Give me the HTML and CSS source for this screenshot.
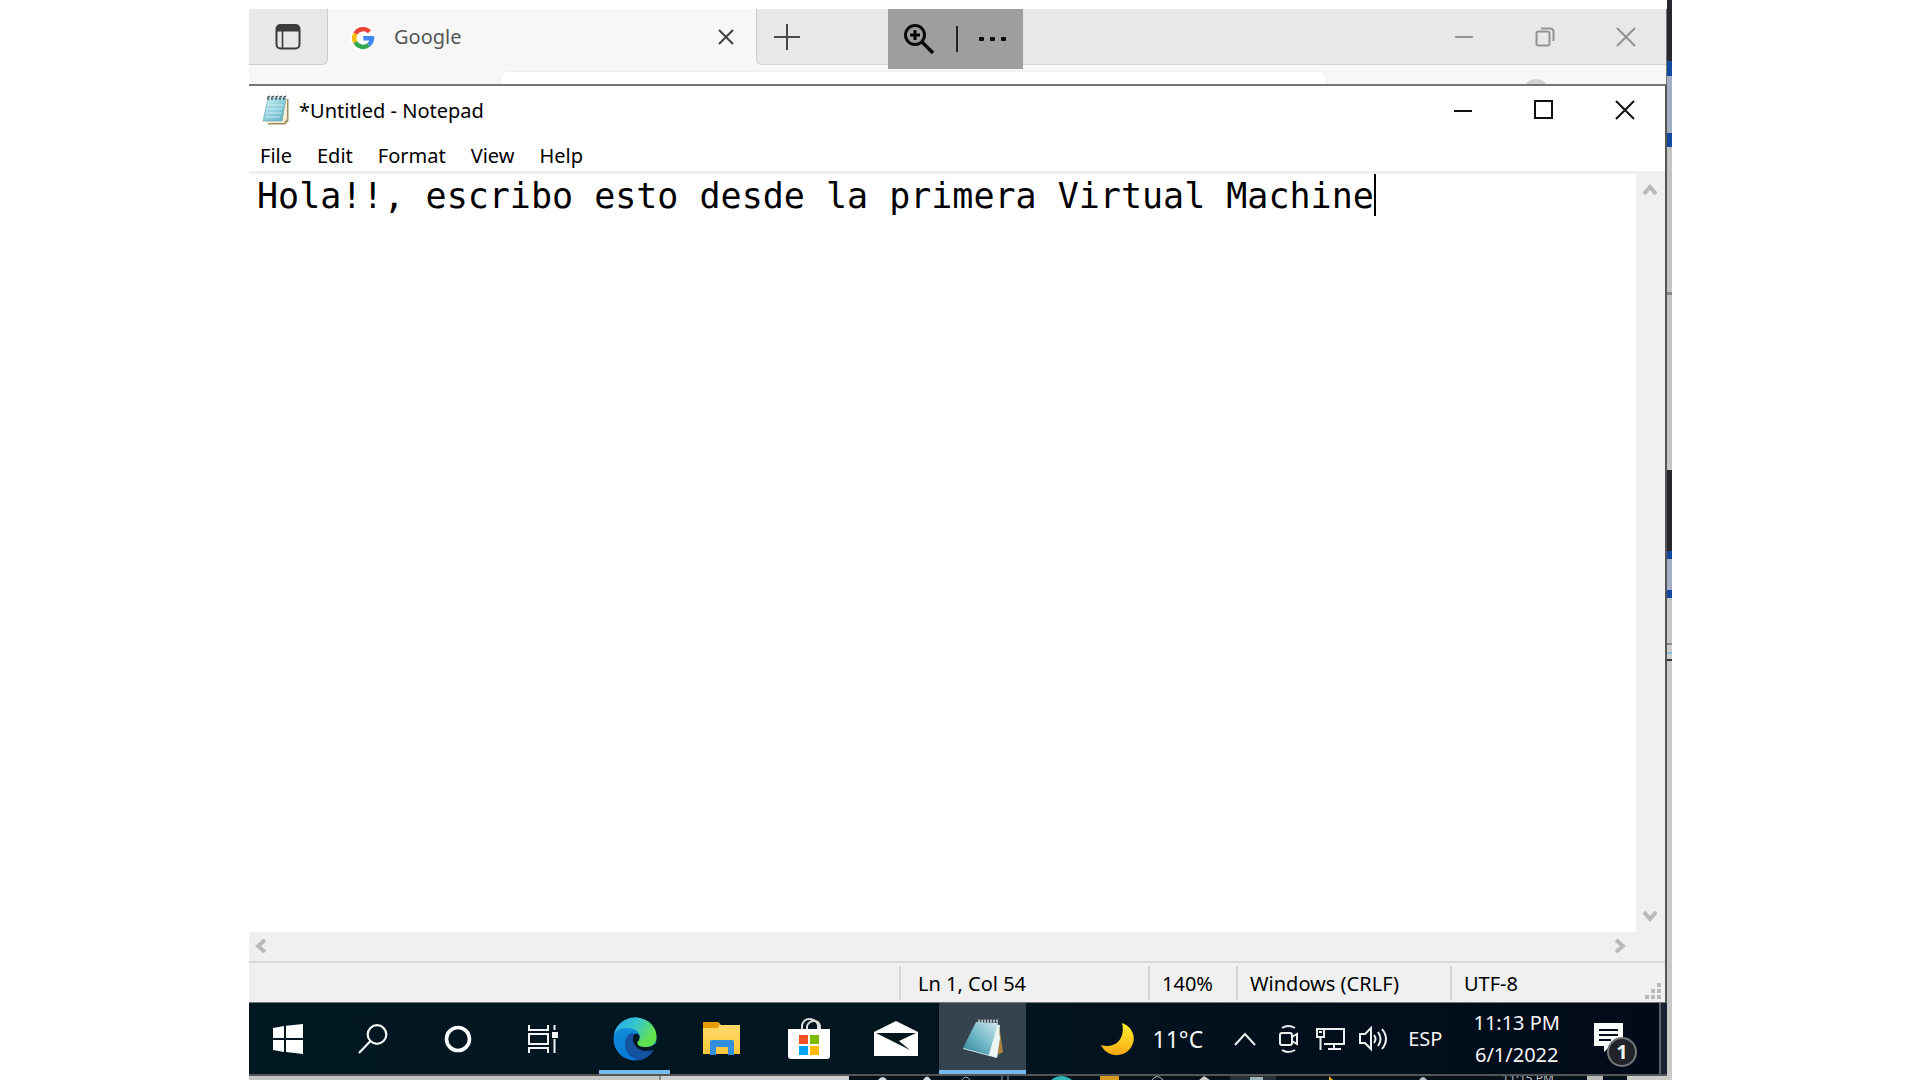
FILE: index.html
```html
<!DOCTYPE html>
<html lang="en">
<head>
<meta charset="utf-8">
<title>Untitled - Notepad</title>
<link rel="stylesheet" href="styles.css">
</head>
<body>
<svg width="0" height="0" class="defs" aria-hidden="true">
  <defs>
    <linearGradient id="page" x1="0" y1="0" x2="1" y2="1"><stop offset="0" stop-color="#d3f0f4"/><stop offset=".5" stop-color="#8fd0dd"/><stop offset="1" stop-color="#58acc0"/></linearGradient>
    <linearGradient id="page2" x1="0" y1="1" x2="1" y2="0"><stop offset="0" stop-color="#2b8197"/><stop offset=".5" stop-color="#75b9c9"/><stop offset="1" stop-color="#d0e6ea"/></linearGradient>
    <linearGradient id="edgeA" x1="0" y1="0" x2="1" y2=".4"><stop offset="0" stop-color="#2aa9e6"/><stop offset=".5" stop-color="#34c4d3"/><stop offset="1" stop-color="#66e34b"/></linearGradient>
    <linearGradient id="edgeB" x1="0" y1="0" x2="0" y2="1"><stop offset="0" stop-color="#1595da"/><stop offset="1" stop-color="#0877d5"/></linearGradient>
    <linearGradient id="moon" x1="0" y1="0" x2="0" y2="1"><stop offset="0" stop-color="#fff02a"/><stop offset="1" stop-color="#f9a817"/></linearGradient>
    <linearGradient id="fold" x1="0" y1="0" x2="0" y2="1"><stop offset="0" stop-color="#ffdc6c"/><stop offset="1" stop-color="#fbc63b"/></linearGradient>
  </defs>
</svg>
<div class="layout">
  <main class="screen">
    <section class="browser" aria-label="Browser">
      <div class="tabs">
        <button class="tab-actions" aria-label="Tab actions"><svg width="26" height="27" viewBox="0 0 26 27" fill="none" stroke="#3b3b3b" stroke-width="2"><rect x="1.5" y="2" width="23" height="23.500" rx="4"/><path d="M2 5.500h22" stroke-width="6"/><path d="M7.500 8v17" stroke-width="1.600"/></svg></button>
        <div class="tab">
          <svg class="google" width="26" height="26" viewBox="0 0 26 26" fill="none" stroke-width="4.400"><circle cx="13" cy="13" r="13" fill="#fff" stroke="none"/><path d="M19.500 6.800A9 9 0 0 0 5.300 8.700" stroke="#ea4335"/><path d="M5.300 8.700a9 9 0 0 0 0 8.600" stroke="#fbbc05"/><path d="M5.300 17.300A9 9 0 0 0 18.700 20" stroke="#34a853"/><path d="M18.700 20A9 9 0 0 0 22 13.300H13.300" stroke="#4285f4"/></svg>
          <span>Google</span>
          <button class="tab-close" aria-label="Close tab"><svg width="16" height="16" viewBox="0 0 16 16" stroke="#444" stroke-width="2"><path d="M1 1l14 14M15 1L1 15"/></svg></button>
        </div>
        <button class="new-tab" aria-label="New tab"><svg width="26" height="26" viewBox="0 0 26 26" stroke="#484848" stroke-width="2"><path d="M13 0v26M0 13h26"/></svg></button>
        <div class="captions dim">
          <button aria-label="Minimize browser"><svg width="20" height="20" viewBox="0 0 20 20"><path d="M1 10h18"/></svg></button>
          <button aria-label="Restore browser"><svg width="20" height="20" viewBox="0 0 20 20"><rect x="1.500" y="4.500" width="13" height="14" rx="2"/><path d="M6 1.500h9q3.500 0 3.500 3.500v9"/></svg></button>
          <button aria-label="Close browser"><svg width="20" height="20" viewBox="0 0 20 20"><path d="M1 1l18 18M19 1L1 19"/></svg></button>
        </div>
      </div>
      <div class="toolbar"><div class="address"></div><div class="avatar"></div></div>
      <div class="zoombar">
        <button aria-label="Zoom"><svg width="32" height="32" viewBox="0 0 32 32" fill="none" stroke="#090909" stroke-width="3"><circle cx="12" cy="12" r="9.500"/><path d="M19 19l11 11" stroke-width="3.500"/><path d="M7 12h10M12 7v10"/></svg></button>
        <i></i>
        <button aria-label="More options"><svg width="28" height="6" viewBox="0 0 28 6" fill="#090909"><rect y="1" width="5" height="4" rx="1"/><rect x="11" y="1" width="5" height="4" rx="1"/><rect x="22" y="1" width="5" height="4" rx="1"/></svg></button>
      </div>
    </section>

    <section class="notepad" aria-label="Notepad">
      <header class="title">
        <svg width="28" height="31" viewBox="0 0 28 31"><path d="M7 4h19.500v22L23 29.500H6z" fill="#a08d63"/><path d="M7 4h18v20l-3 4H4z" fill="#f4ecd2"/><path d="M6 3h18l-4 23H1z" fill="url(#page)" stroke="#65a4b0" stroke-width=".6"/><path d="M6 10h15M5 14h15M4 18h15M4 22h14" stroke="#c9eef2" stroke-width="1"/><path d="M6 5V2l2-1M10 5V2l2-1M14 5V2l2-1M18 5V2l2-1M22 5V2l2-1" fill="none" stroke="#3e4c50" stroke-width="1.300"/></svg>
        <h1>*Untitled - Notepad</h1>
        <div class="captions">
          <button aria-label="Minimize"><svg width="20" height="20" viewBox="0 0 20 20"><path d="M1 11h18"/></svg></button>
          <button aria-label="Maximize"><svg width="20" height="20" viewBox="0 0 20 20"><path d="M1 1h17v17H1z"/></svg></button>
          <button aria-label="Close"><svg width="20" height="20" viewBox="0 0 20 20"><path d="M1 1l18 18M19 1L1 19"/></svg></button>
        </div>
      </header>
      <nav class="menu"><button>File</button><button>Edit</button><button>Format</button><button>View</button><button>Help</button></nav>
      <div class="editor">
        <div class="page"><textarea aria-label="Text editor" rows="1" spellcheck="false">Hola!!, escribo esto desde la primera Virtual Machine</textarea><span class="caret"></span></div>
        <div class="vscroll">
          <button aria-label="Scroll up"><svg width="14" height="12" viewBox="0 0 14 12"><path d="M1 10l6-7 6 7"/></svg></button>
          <button aria-label="Scroll down"><svg width="14" height="12" viewBox="0 0 14 12"><path d="M1 2l6 7 6-7"/></svg></button>
        </div>
      </div>
      <div class="hscroll">
        <button aria-label="Scroll left"><svg width="12" height="14" viewBox="0 0 12 14"><path d="M10 1L3 7l7 6"/></svg></button>
        <button aria-label="Scroll right"><svg width="12" height="14" viewBox="0 0 12 14"><path d="M2 1l7 6-7 6"/></svg></button>
      </div>
      <footer class="status">
        <span class="position">Ln 1, Col 54</span><span class="zoom">140%</span><span class="eol">Windows (CRLF)</span><span class="encoding">UTF-8</span>
        <svg class="grip" width="16" height="16" viewBox="0 0 16 16" fill="#b8b8b8"><path d="M12 0h4v4h-4zM6 6h4v4H6zM12 6h4v4h-4zM0 12h4v4H0zM6 12h4v4H6zM12 12h4v4h-4z"/></svg>
      </footer>
    </section>

    <footer class="taskbar">
      <button class="start" aria-label="Start"><svg width="30" height="30" viewBox="0 0 30 30" fill="#fff"><path d="M0 4l11-2v12H0zM13 1.700L30 0v14H13zM0 16h11v12L0 26zM13 16h17v14l-17-2z"/></svg></button>
      <button class="sys" aria-label="Search"><svg width="30" height="30" viewBox="0 0 30 30" fill="none" stroke="#f4f4f4" stroke-width="2.200"><circle cx="19" cy="10.500" r="9.300"/><path d="M12.500 17L1 29"/></svg></button>
      <button class="sys" aria-label="Cortana"><svg width="30" height="30" viewBox="0 0 30 30" fill="none" stroke="#fff" stroke-width="3.600"><circle cx="15" cy="15" r="11.500"/></svg></button>
      <button class="sys last" aria-label="Task view"><svg width="30" height="28" viewBox="0 0 30 28" fill="none" stroke="#f4f4f4" stroke-width="2"><path d="M1 0v5h19V0M1 9h19v10H1zM1 28v-5h19v5M26.500 0v5M26.500 14v14"/><path d="M24 7h6v6h-6z" fill="#fff" stroke="none"/></svg></button>
      <button class="app open" aria-label="Microsoft Edge"><svg width="44" height="44" viewBox="0 0 44 44"><circle cx="22" cy="22" r="21.500" fill="url(#edgeB)"/><path d="M.8 18C3 7 12 .5 22 .5 35 .5 43.500 10 43.500 19c0 7-5 10.500-10.500 10.500-6 0-10-2-8.500-4.500 2.500-3 3-6 1-9C24 13 20 11 14 11 8 11 3 13.500.8 18z" fill="url(#edgeA)"/><path d="M19 16c-5 2-7 6-7 11 0 9 7 16 16 16 6-2 11-6 13-11-1-1-3 1-8 1-8 0-14-6-11-14 0-2-1-3-3-3z" fill="#1552a0"/><path d="M22 17c3-2 6 2 4 6-1 2-3 4 1 6 5 2 13 1 16-3l1 4-2 5c-1-3-3-1-9-1-8 0-14-7-13-13 0-2 1-3 2-4z" fill="#011721"/><path d="M25 24c-2 4 2 6 8 6 6 0 10-4 10.500-9z" fill="#5de04f"/></svg></button>
      <button class="app" aria-label="File Explorer"><svg width="40" height="34" viewBox="0 0 40 34"><path d="M1 0h15l3 3h19v29H1z" fill="url(#fold)"/><path d="M1 0h15l2 2-2 4H1z" fill="#e79b06"/><path d="M8 33V20q0-2 2-2h20q2 0 2 2v13h-6v-8H14v8z" fill="#338fdd"/></svg></button>
      <button class="app" aria-label="Microsoft Store"><svg width="42" height="44" viewBox="0 0 42 44"><path d="M14 13V8q2-6 7-6 7 0 9 6v5M19 13V9q2-5 7-5 5 0 6 5v4" fill="none" stroke="#ddd" stroke-width="2"/><path d="M0 12h42v27q0 3-3 3H3q-3 0-3-3z" fill="#fff"/><path d="M11 18h9v9h-9z" fill="#f25022"/><path d="M22 18h9v9h-9z" fill="#7fba00"/><path d="M11 29h9v9h-9z" fill="#00a4ef"/><path d="M22 29h9v9h-9z" fill="#ffb900"/></svg></button>
      <button class="app" aria-label="Mail"><svg width="44" height="36" viewBox="0 0 44 36"><path d="M0 11L22 0l22 11v24H0z" fill="#fff"/><path d="M2 12h40l-17 8 11 9z" fill="#021620"/></svg></button>
      <button class="app open active" aria-label="Notepad"><svg width="42" height="42" viewBox="0 0 42 42"><path d="M37 6l4 28-5 3z" fill="#a98445"/><path d="M15 4l23 3-3 33L1 31z" fill="#d6e7e9"/><path d="M14 4l22 1-9 32L1 30z" fill="url(#page2)"/><path d="M36 6l-9 31 8 3 3-20z" fill="#ecf5f5"/><path d="M16 3h20" stroke="#a9b4b8" stroke-width="3" stroke-dasharray="2 1"/></svg></button>
      <div class="tray">
        <button class="weather"><svg width="34" height="34" viewBox="0 0 34 34"><path d="M21 1c16 6 15 25 1 31-8 3-18 0-22-9 14 4 25-6 21-22z" fill="url(#moon)" stroke="none"/></svg>11°C</button>
        <button class="chev" aria-label="Show hidden icons"><svg width="22" height="14" viewBox="0 0 22 14"><path d="M1 13L11 2l10 11"/></svg></button>
        <button class="cam" aria-label="Meet now"><svg width="20" height="30" viewBox="0 0 20 30"><rect x="1" y="9" width="12" height="12" rx="2"/><path d="M13 13l5-3v10l-5-3M3 4q6-4 13 0M3 26q6 4 13 0"/></svg></button>
        <button class="net" aria-label="Network"><svg width="30" height="24" viewBox="0 0 30 24"><path d="M9 2h19v15H8M18 17v5M12 22h13M1 2h7v8H1zM4.500 10v13M3 5h3"/></svg></button>
        <button class="vol" aria-label="Volume"><svg width="30" height="26" viewBox="0 0 30 26"><path d="M1 8h5l6-6v21l-6-6H1zM15 9q3 4 0 8M19 6q5 7 0 14M23 3q8 10 0 20"/></svg></button>
        <button class="lang">ESP</button>
        <button class="clock"><span>11:13 PM</span><span>6/1/2022</span></button>
        <button class="notes" aria-label="Notifications"><svg width="30" height="30" viewBox="0 0 30 30"><path d="M0 0h29v23H16l-6 6v-6H0z" fill="#fff" stroke="none"/><path d="M5 7h19M5 12h19M5 17h12" stroke="#020c19"/></svg><b>1</b></button>
        <button class="desktop" aria-label="Show desktop"></button>
      </div>
    </footer>
    <div class="host-task">
      <div class="host-window"></div><div class="host-window second"></div>
      <div class="host-icons">
        <svg width="620" height="4" viewBox="0 0 620 4"><path d="M29 4q5-6 9 0M74 4q4-7 8 0" fill="#d9dddf"/><path d="M113 4q4-6 8 0M153 0v4M159 0v4" stroke="#a7adb1" fill="none"/><path d="M202 4q10-8 21 0" fill="#2fb5b4"/><path d="M251 0h19v4h-19z" fill="#d59b21"/><path d="M303 4q5-7 11 0" stroke="#c0c3c5" fill="none"/><path d="M350 4l5-4 6 4" fill="#ccc"/><path d="M381 0h46v4h-46z" fill="#27313a"/><path d="M401 1h13v3h-13z" fill="#9cb3bd"/><path d="M480 0l4 4h-4z" fill="#e5b211"/><path d="M570 4q4-6 8 0" fill="#bbb"/></svg>
        <span>11:15 PM</span><i></i>
      </div>
    </div>
  </main>
  <aside class="host-edge" aria-hidden="true"></aside>
</div>
</body>
</html>
```
FILE: styles.css
```css
* { box-sizing: border-box; }
body {
  margin: 0;
  background: #fff;
  color: #000;
  font: 20px/28px "Noto Sans", "Open Sans", sans-serif;
}
button {
  display: flex;
  align-items: center;
  justify-content: center;
  padding: 0;
  border: 0;
  background: none;
  color: inherit;
  font: inherit;
}
svg { display: block; flex: none; }
.defs { position: absolute; }
.layout {
  display: grid;
  grid-template-columns: 1fr 5px;
  min-height: 100vh;
  padding: 0 248px 0 249px;
}
.screen {
  display: flex;
  flex-direction: column;
  min-width: 0;
  padding-top: 9px;
}
.host-edge {
  background: linear-gradient(#27282e 61px, #114a9f 61px 76px, #a2aec4 76px 133px, #114a9f 133px 147px,
    #c4c4c3 147px 292px, #888 292px 295px, #c4c4c3 295px 470px, #27282b 470px 551px, #114a9f 551px 559px,
    #a3afc7 559px 590px, #114a9f 590px 598px, #c6c6c5 598px 643px, #888 643px 645px, #ccc 645px 652px,
    #82bdd8 652px 654px, #ccc 654px 659px, #333 659px 661px, #c9c9c9 661px);
}

/* Browser window behind the editor */
.browser {
  position: relative;
  height: 75px;
  background: #f7f7f7;
  border-right: 1px solid #777;
}
.tabs { display: flex; height: 56px; background: #f7f7f7; color: #555; }
.tab-actions {
  width: 79px;
  background: #e8e8e8;
  border-right: 1px solid #ccc;
  border-bottom: 1px solid #ccc;
  border-radius: 0 0 6px 0;
}
.tab { display: flex; align-items: center; width: 428px; padding: 0 22px; }
.tab span { flex: 1; margin-left: 18px; }
.google { margin-top: 2px; }
.tab-close { width: 16px; height: 30px; }
.new-tab {
  width: 60px;
  background: #e8e8e8;
  border-left: 1px solid #ccc;
  border-bottom: 1px solid #d4d4d4;
  border-radius: 0 0 0 6px;
}
.captions { display: flex; margin-left: auto; }
.captions button { width: 81px; height: 48px; }
.captions svg { fill: none; stroke: #111; stroke-width: 2; }
.tabs .captions {
  flex: 1;
  justify-content: flex-end;
  background: #e8e8e8;
  border-bottom: 1px solid #d4d4d4;
}
.tabs .captions button { height: 56px; }
.captions.dim svg { stroke: #929292; }
.toolbar { display: flex; height: 19px; padding: 7px 117px 0 252px; overflow: hidden; }
.address { flex: 1; margin-right: 197px; height: 40px; background: #fff; border-radius: 6px; box-shadow: 0 0 2px #ddd; }
.avatar { width: 26px; height: 26px; margin-top: 7px; border-radius: 50%; background: #d1d1cd; }
.zoombar {
  position: absolute;
  top: 0;
  left: 639px;
  display: flex;
  align-items: center;
  gap: 21px;
  width: 135px;
  height: 60px;
  padding-left: 15px;
  background: #9e9e9e;
}
.zoombar i { width: 2px; height: 26px; background: #222; }

/* Notepad */
.notepad {
  flex: 1;
  display: flex;
  flex-direction: column;
  border-top: 2px solid #757575;
  border-right: 2px solid #555;
  border-bottom: 1px solid #777;
}
.title { display: flex; align-items: center; height: 48px; padding-left: 13px; }
.title h1 { margin: 2px 0 0 9px; font-size: 20px; font-weight: 400; }
.menu { display: flex; height: 40px; gap: 25px; padding: 6px 11px 0; border-bottom: 3px solid #efefef; }
.editor { flex: 1; display: flex; }
.page { flex: 1; display: flex; align-items: flex-start; min-width: 0; padding-left: 8px; }
.page textarea {
  width: 53ch;
  height: 44px;
  padding: 0;
  border: 0;
  outline: 0;
  resize: none;
  overflow: hidden;
  white-space: pre;
  background: none;
  color: #000;
  font: 35px/44px "DejaVu Sans Mono", monospace;
}
.caret { width: 2px; height: 42px; background: #000; }
.vscroll {
  display: flex;
  flex-direction: column;
  justify-content: space-between;
  width: 29px;
  padding: 10px 2px 10px 0;
  background: #f0f0f0;
}
.hscroll {
  display: flex;
  justify-content: space-between;
  height: 29px;
  padding: 0 39px 2px 6px;
  background: #f0f0f0;
}
.vscroll svg, .hscroll svg { fill: none; stroke: #b9b9b9; stroke-width: 4; }
.status {
  position: relative;
  display: flex;
  justify-content: flex-end;
  height: 41px;
  padding: 3px 0 2px;
  background: #f0f0f0;
  border-top: 2px solid #d9d9d9;
}
.status span { padding-left: 12px; border-left: 2px solid #d6d6d6; line-height: 36px; white-space: nowrap; }
.status .position { width: 249px; padding-left: 17px; }
.status .zoom { width: 88px; }
.status .eol { width: 214px; }
.status .encoding { width: 215px; }
.grip { position: absolute; right: 4px; bottom: 3px; }

/* Taskbar */
.taskbar {
  display: flex;
  height: 73px;
  background: linear-gradient(90deg, #011721, #021620 45%, #010a19);
  border-bottom: 2px solid #555;
  color: #f5f5f5;
}
.start { width: 81px; padding-right: 3px; }
.sys { width: 85px; }
.last { margin-right: 6px; }
.app { position: relative; width: 87px; }
.open::after {
  content: "";
  position: absolute;
  left: 8px;
  right: 8px;
  bottom: 0;
  height: 4px;
  background: #76b9ed;
}
.active { background: #34434e; }
.active::after { left: 0; right: 0; }
.tray { display: flex; margin-left: auto; }
.tray svg { fill: none; stroke: #eee; stroke-width: 2; }
.weather { gap: 18px; margin-right: 31px; font-size: 23px; }
.chev { margin-right: 23px; }
.cam { margin-right: 17px; }
.net { margin-right: 13px; }
.vol { margin-right: 19px; }
.lang { margin-right: 31px; }
.clock { flex-direction: column; gap: 4px; margin-right: 34px; }
.notes { position: relative; width: 30px; margin-right: 35px; padding-bottom: 2px; }
.notes b {
  position: absolute;
  left: 13px;
  top: 34px;
  width: 30px;
  height: 30px;
  border: 2px solid #777;
  border-radius: 50%;
  background: #20242a;
  font-size: 20px;
  line-height: 26px;
  text-align: center;
}
.desktop { width: 8px; background: #172232; border-left: 2px solid #58616c; }

/* Sliver of the host desktop under the session */
.host-task { display: flex; height: 4px; overflow: hidden; background: #c9c9c9; }
.host-window { width: 412px; background: #c4c4c4; border-right: 2px solid #888; }
.second { width: 188px; background: #cfcfcf; border: 0; }
.host-icons { flex: 1; display: flex; justify-content: space-between; margin-right: 40px; background: #06121b; overflow: hidden; }
.host-icons span { margin-top: -4px; color: #bbb; font-size: 12px; line-height: 14px; }
.host-icons i { width: 16px; margin-right: 24px; background: #bbb; }
```
